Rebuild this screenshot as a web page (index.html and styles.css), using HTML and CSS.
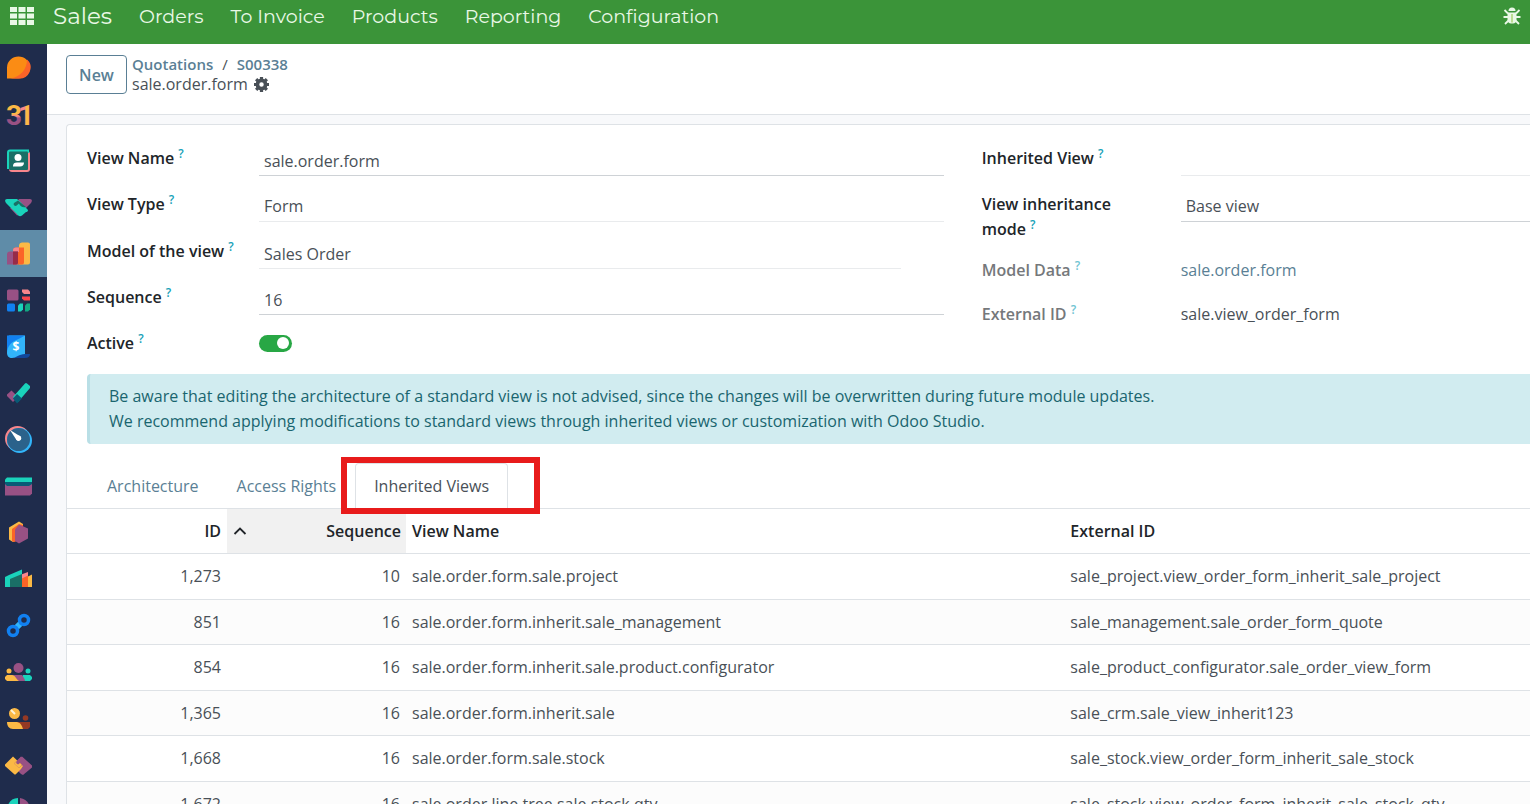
FILE: index.html
```html
<!DOCTYPE html>
<html lang="en">
<head>
    <meta charset="UTF-8">
    <meta name="viewport" content="width=device-width, initial-scale=1.0">
    <title>sale.order.form</title>
    <link rel="stylesheet" href="styles.css">
</head>
<body>

    <nav class="navbar">
        <button class="apps-btn" aria-label="Apps">
            <svg width="24" height="18" viewBox="0 0 24 18" fill="#e9f8e6">
                <rect x="0" y="0" width="7" height="5"/><rect x="8.5" y="0" width="7" height="5"/><rect x="17" y="0" width="7" height="5"/>
                <rect x="0" y="6.5" width="7" height="5"/><rect x="8.5" y="6.5" width="7" height="5"/><rect x="17" y="6.5" width="7" height="5"/>
                <rect x="0" y="13" width="7" height="5"/><rect x="8.5" y="13" width="7" height="5"/><rect x="17" y="13" width="7" height="5"/>
            </svg>
        </button>
        <a class="brand" href="#">Sales</a>
        <div class="menu">
            <a href="#">Orders</a>
            <a href="#">To Invoice</a>
            <a href="#">Products</a>
            <a href="#">Reporting</a>
            <a href="#">Configuration</a>
        </div>
        <button class="debug-btn" aria-label="Debug">
            <svg width="18" height="18" viewBox="0 0 18 18" fill="#e9f8e6" stroke="#e9f8e6">
                <path d="M5.5 4a3.5 3.5 0 0 1 7 0z" stroke="none"/>
                <path d="M4.500 5.500h9v7c0 2.500-1.500 4-3.500 4H8c-2 0-3.500-1.500-3.500-4z" stroke="none"/>
                <path d="M1.500 3l3.500 3.500M16.500 3L13 6.500M0.500 10H5M17.500 10H13M2 17L5.500 13.500M16 17L12.500 13.500" fill="none" stroke-width="1.800"/>
                <path d="M9 7v8.500" stroke="#8dc13f" stroke-width="1"/>
            </svg>
        </button>
    </nav>

    <div class="main">
        <aside class="sidebar">
            <a href="#" aria-label="Discuss"><svg viewBox="0 0 27 27">
                <path d="M2 24.500V13.500A11.500 11 0 1 1 13.500 24.500z" fill="#fb8c14"/>
                <path d="M22 5.500A11.300 11 0 0 1 13.500 24.500H5C16 23 22 15 22 5.500z" fill="#fb6428"/>
            </svg></a>
            <a href="#" aria-label="Calendar"><svg viewBox="0 0 27 27">
                <defs>
                    <linearGradient id="three" x1="0" y1="0" x2="0" y2="1">
                        <stop offset="0.450" stop-color="#fbb945"/>
                        <stop offset="0.520" stop-color="#f7868c"/>
                        <stop offset="0.580" stop-color="#985184"/>
                    </linearGradient>
                    <linearGradient id="one" x1="0" y1="0" x2="1" y2="0">
                        <stop offset="0.450" stop-color="#f7868c"/>
                        <stop offset="0.480" stop-color="#fbb945"/>
                    </linearGradient>
                </defs>
                <text class="day" x="1" y="24" fill="url(#three)">3</text>
                <text class="day" x="13" y="24" fill="url(#one)">1</text>
            </svg></a>
            <a href="#" aria-label="Contacts"><svg viewBox="0 0 27 27">
                <rect x="4" y="4" width="21" height="21" rx="3" fill="#f7868c"/>
                <path d="M5 2.500H24V6H6V22H2V5.500A3 3 0 0 1 5 2.500z" fill="#1ad3bb"/>
                <rect x="4" y="4.500" width="19" height="18.500" rx="1" fill="#1a6f66"/>
                <circle cx="13" cy="10.500" r="3.500" fill="#fff"/>
                <path d="M8 19C8 16.500 9.500 15.500 12 15.500H19C19 18 17.500 19.500 15 19.500H8z" fill="#fff"/>
            </svg></a>
            <a href="#" aria-label="CRM"><svg viewBox="0 0 27 27">
                <path d="M14 5H25C27 5 27.500 7 26 9L20 15L11 9z" fill="#985184"/>
                <path d="M5 14L10 12L15 20L12 21.500z" fill="#985184"/>
                <path d="M2 5H12L15 7.500L23 16C23 17.500 22 18 21 18L17 21.500C15 23 13 22 12 20L1 9C-.5 7 0 5 2 5z" fill="#1ad3bb"/>
                <path d="M13 6.500L21 13C18 14 15 12.500 14 9.500L11 12C9 12 8 10.500 9 9z" fill="#1a6f66"/>
            </svg></a>
            <a href="#" class="active" aria-label="Sales"><svg viewBox="0 0 27 27">
                <path d="M17 2.500H23A2 2 0 0 1 25 4.500V22.500A2 2 0 0 1 23 24.500H14V5A3 3 0 0 1 17 2.500z" fill="#fbb945"/>
                <path d="M11 7.500H19V22.500A2 2 0 0 1 17 24.500H8V10.500A3 3 0 0 1 11 7.500z" fill="#fb6428"/>
                <path d="M11 7.500H14V12H8V10.500A3 3 0 0 1 11 7.500z" fill="#f7868c"/>
                <path d="M5 11.500H13V22.500A2 2 0 0 1 11 24.500H2V14.500A3 3 0 0 1 5 11.500z" fill="#985184"/>
                <path d="M8 11.500H13V22.500A2 2 0 0 1 11 24.500H8z" fill="#962b48"/>
            </svg></a>
            <a href="#" aria-label="Dashboards"><svg viewBox="0 0 27 27">
                <rect x="2" y="2.500" width="11.500" height="11" rx="1.500" fill="#985184"/>
                <path d="M17 2.500H23L25 4.500V7H19L17 5z" fill="#f7868c"/>
                <path d="M17 9.500H25V13.500H19L17 11.500z" fill="#f9464c"/>
                <rect x="2" y="16.500" width="8" height="8" rx="1.500" fill="#1180f0"/>
                <path d="M13 18.500L15 16.500H18V22.500L16 24.500H13z" fill="#1ad3bb"/>
                <path d="M20 18.500L22 16.500H25V22.500L23 24.500H20z" fill="#12a882"/>
            </svg></a>
            <a href="#" aria-label="Invoicing"><svg viewBox="0 0 27 27">
                <path d="M9 21H25C25 23.500 23 25 20 25H5z" fill="#12479b"/>
                <path d="M4 2.500H20V21C14 21 11 25 7 25C4 25 2 23 2 20V4.500z" fill="#32b5fa"/>
                <path d="M2 2.500H20C14 6 8 8 5 11.500C3 14 2 17 2 20z" fill="#1180f0"/>
                <text x="11" y="18" class="dollar">$</text>
            </svg></a>
            <a href="#" aria-label="To-do"><svg viewBox="0 0 27 27">
                <path d="M2 14.500L6.500 10.500L13 17L8 22L2 16z" fill="#985184"/>
                <path d="M20 3.500Q21 2.500 22 3.500L25 6V8L13 22L8 17z" fill="#1ad3bb"/>
                <path d="M12 14L17 18.500L12 23.500L8 18.500z" fill="#085b76"/>
            </svg></a>
            <a href="#" aria-label="Timesheets"><svg viewBox="0 0 27 27">
                <circle cx="12.500" cy="12.500" r="12.500" fill="#f7868c"/>
                <circle cx="14.500" cy="14.500" r="12.500" fill="#32b5fa"/>
                <circle cx="13.500" cy="13.500" r="11.500" fill="#2b628b"/>
                <path d="M5 4L15.500 10.500A2.500 2.500 0 0 1 11.500 14z" fill="#fff"/>
                <circle cx="13.500" cy="12" r="2.500" fill="#fff"/>
            </svg></a>
            <a href="#" aria-label="Expenses"><svg viewBox="0 0 27 27">
                <path d="M0 11H27V20.500L25 22.500H0z" fill="#985184"/>
                <path d="M0 8H27V11L24 13H2L0 11z" fill="#085b76"/>
                <path d="M2 4.500H27V9H0V6.500z" fill="#1ad3bb"/>
            </svg></a>
            <a href="#" aria-label="Inventory"><svg viewBox="0 0 27 27">
                <path d="M14 2.500L18 5V18L8 23L4 20.500V8.500z" fill="#fbb945"/>
                <path d="M14 5L18 6V20L9 23L7 22V10z" fill="#fb6428"/>
                <path d="M14 5.500L23 9.500V19.500L14 24.500L10 22V10.500z" fill="#985184"/>
            </svg></a>
            <a href="#" aria-label="Manufacturing"><svg viewBox="0 0 27 27">
                <path d="M20 12L27 8.500V21H20z" fill="#fbb945"/>
                <path d="M15 9L23 6V13L17 16z" fill="#f7868c"/>
                <path d="M16 13L23 9.500V21H16z" fill="#fb6428"/>
                <path d="M0 11L4 9L17 3.500V21H0z" fill="#1ad3bb"/>
                <path d="M5 13L17 8V21H5z" fill="#1a6f66"/>
            </svg></a>
            <a href="#" aria-label="Link tracker"><svg viewBox="0 0 27 27" fill="none">
                <path d="M8 19L19 8" stroke="#32b5fa" stroke-width="6"/>
                <circle cx="19" cy="8" r="4.500" fill="#1f2c4c" stroke="#1180f0" stroke-width="3.500"/>
                <circle cx="8" cy="19" r="4.500" fill="#1f2c4c" stroke="#1180f0" stroke-width="3.500"/>
            </svg></a>
            <a href="#" aria-label="Employees"><svg viewBox="0 0 27 27">
                <circle cx="13.500" cy="9" r="5" fill="#985184"/>
                <circle cx="4" cy="12" r="2.500" fill="#fbb945"/>
                <circle cx="23" cy="12" r="2.500" fill="#1ad3bb"/>
                <path d="M2 16H10L17 22H2L0 20V18z" fill="#fbb945"/>
                <path d="M18 16H25L27 18V20L25 22H15z" fill="#1ad3bb"/>
                <path d="M7 16H17C19 19 20 20 20 22H14C11 20 10 16 7 16z" fill="#985184"/>
            </svg></a>
            <a href="#" aria-label="Attendances"><svg viewBox="0 0 27 27">
                <circle cx="9.500" cy="8.500" r="5.500" fill="#fbb945"/>
                <path d="M6 5L10 9" stroke="#fff3d5" stroke-width="2"/>
                <circle cx="20.500" cy="13" r="2.800" fill="#953924"/>
                <path d="M11 17H25V22L23 24H13z" fill="#953924"/>
                <path d="M2 17H12C16 18 17 21 18 24H8C4 24 2 21 2 17z" fill="#fbb945"/>
            </svg></a>
            <a href="#" aria-label="Time off"><svg viewBox="0 0 27 27">
                <path d="M17 4.500L27 13.500V15.500L18 23L16 22L9 15L11 10z" fill="#985184"/>
                <path d="M8 4.500L18 14L16 17L11 22Q10 23 9 22L0 14V12.500z" fill="#fbb945"/>
                <path d="M16 4.500L9 11.500L14 16L18 12.500L15 10L19 7z" fill="#985184"/>
                <path d="M12 9L9 11.500L14 16L17 13L15 11L13 12.500L11 11z" fill="#fbb945"/>
            </svg></a>
            <a href="#" aria-label="Surveys"><svg viewBox="0 0 27 27">
                <path d="M13 0V14H2V11C3 4 7 0 13 0z" fill="#1ad3bb"/>
                <path d="M15 0C21 1 25 5 25 12H15z" fill="#985184"/>
            </svg></a>
        </aside>

        <div class="content">
            <header class="control-panel">
                <button class="new-btn">New</button>
                <div class="breadcrumb">
                    <div class="crumbs"><a href="#">Quotations</a><span class="sep">/</span><a href="#">S00338</a></div>
                    <div class="current">
                        <span>sale.order.form</span>
                        <button class="gear-btn" aria-label="Actions">
                            <svg width="15" height="15" viewBox="0 0 14 14">
                                <circle cx="7" cy="7" r="3.800" fill="none" stroke="#495057" stroke-width="3.400"/>
                                <path d="M7 0V2.500M7 11.500V14M0 7H2.500M11.500 7H14M2 2L4 4M10 10L12 12M12 2L10 4M4 10L2 12" stroke="#495057" stroke-width="3"/>
                            </svg>
                        </button>
                    </div>
                </div>
            </header>

            <main class="sheet">
                <form class="groups">
                    <div class="group">
                        <div class="row">
                            <label for="name">View Name <sup>?</sup></label>
                            <input type="text" id="name" class="field required" value="sale.order.form">
                        </div>
                        <div class="row tall">
                            <label for="type">View Type <sup>?</sup></label>
                            <select id="type" class="field"><option>Form</option></select>
                        </div>
                        <div class="row">
                            <label for="model">Model of the view <sup>?</sup></label>
                            <input type="text" id="model" class="field many2one" value="Sales Order">
                        </div>
                        <div class="row">
                            <label for="sequence">Sequence <sup>?</sup></label>
                            <input type="text" id="sequence" class="field required" value="16">
                        </div>
                        <div class="row last">
                            <label for="active">Active <sup>?</sup></label>
                            <input type="checkbox" id="active" class="toggle" checked>
                        </div>
                    </div>
                    <div class="group right">
                        <div class="row">
                            <label for="inherited">Inherited View <sup>?</sup></label>
                            <input type="text" id="inherited" class="field">
                        </div>
                        <div class="row double">
                            <label for="mode">View inheritance mode <sup>?</sup></label>
                            <select id="mode" class="field required"><option>Base view</option></select>
                        </div>
                        <div class="row readonly">
                            <span class="label">Model Data <sup>?</sup></span>
                            <a href="#">sale.order.form</a>
                        </div>
                        <div class="row readonly">
                            <span class="label">External ID <sup>?</sup></span>
                            <span>sale.view_order_form</span>
                        </div>
                    </div>
                </form>

                <div class="alert">
                    Be aware that editing the architecture of a standard view is not advised, since the changes will be overwritten during future module updates.<br>
                    We recommend applying modifications to standard views through inherited views or customization with Odoo Studio.
                </div>

                <div class="tabs">
                    <button class="tab">Architecture</button>
                    <button class="tab">Access Rights</button>
                    <button class="tab selected">Inherited Views</button>
                </div>

                <table class="list">
                    <thead>
                        <tr>
                            <th class="col-id">ID</th>
                            <th class="col-seq">
                                <div class="sorted">
                                    <svg width="14" height="8" viewBox="0 0 14 8"><path d="M1.500 7L7 1.500L12.500 7" fill="none" stroke="#212529" stroke-width="1.800"/></svg>
                                    <span>Sequence</span>
                                </div>
                            </th>
                            <th class="col-name">View Name</th>
                            <th>External ID</th>
                        </tr>
                    </thead>
                    <tbody>
                        <tr><td class="num">1,273</td><td class="num">10</td><td>sale.order.form.sale.project</td><td>sale_project.view_order_form_inherit_sale_project</td></tr>
                        <tr><td class="num">851</td><td class="num">16</td><td>sale.order.form.inherit.sale_management</td><td>sale_management.sale_order_form_quote</td></tr>
                        <tr><td class="num">854</td><td class="num">16</td><td>sale.order.form.inherit.sale.product.configurator</td><td>sale_product_configurator.sale_order_view_form</td></tr>
                        <tr><td class="num">1,365</td><td class="num">16</td><td>sale.order.form.inherit.sale</td><td>sale_crm.sale_view_inherit123</td></tr>
                        <tr><td class="num">1,668</td><td class="num">16</td><td>sale.order.form.sale.stock</td><td>sale_stock.view_order_form_inherit_sale_stock</td></tr>
                        <tr><td class="num">1,672</td><td class="num">16</td><td>sale.order.line.tree.sale.stock.qty</td><td>sale_stock.view_order_form_inherit_sale_stock_qty</td></tr>
                    </tbody>
                </table>
            </main>
        </div>
    </div>

</body>
</html>
```

FILE: styles.css
```css
* {
    box-sizing: border-box;
}
body {
    margin: 0;
    height: 100vh;
    overflow: hidden;
    display: flex;
    flex-direction: column;
    font-family: "Segoe UI", "Open Sans", sans-serif;
    font-size: 16px;
    line-height: 25px;
    color: #495057;
}
a {
    color: #5a7f95;
    text-decoration: none;
}
button {
    font: inherit;
    background: none;
    border: none;
    padding: 0;
    cursor: pointer;
}
svg {
    display: block;
}

/* top bar */
.navbar {
    flex: none;
    height: 44px;
    padding: 0 9px 12px 10px;
    display: flex;
    align-items: center;
    background-color: #3b9439;
    font-family: Montserrat, Inter, sans-serif;
    font-size: 19px;
}
.navbar a {
    color: #e9f8e6;
}
.brand {
    margin-left: 19px;
    font-size: 23px;
}
.menu {
    display: flex;
    gap: 27px;
    margin-left: 27px;
}
.debug-btn {
    margin-left: auto;
}

.main {
    flex: 1;
    min-height: 0;
    display: flex;
}

/* app sidebar */
.sidebar {
    flex: none;
    width: 47px;
    overflow: hidden;
    background-color: #1f2c4c;
}
.sidebar a {
    height: 46px;
    padding-left: 5px;
    display: flex;
    align-items: center;
}
.sidebar a:nth-child(odd) {
    height: 47px;
}
.sidebar .active {
    background-color: #5f8ca8;
}
.sidebar svg {
    width: 27px;
    height: 27px;
}
.day {
    font-family: Roboto, sans-serif;
    font-size: 28px;
    font-weight: 700;
}
.dollar {
    font-size: 12px;
    font-weight: bold;
    fill: #fff;
    text-anchor: middle;
}

.content {
    flex: 1;
    min-width: 0;
    display: flex;
    flex-direction: column;
    background-color: #f8f9fb;
}

/* control panel */
.control-panel {
    flex: none;
    height: 71px;
    padding: 10px 19px 0;
    display: flex;
    align-items: flex-start;
    gap: 5px;
    background-color: #fff;
    border-bottom: 1px solid #dee2e6;
}
.new-btn {
    width: 61px;
    height: 39px;
    margin-top: 1px;
    padding-top: 1px;
    border: 1px solid #5a7f95;
    border-radius: 4px;
    color: #5a7f95;
    font-weight: 600;
}
.breadcrumb {
    line-height: 20px;
}
.crumbs {
    font-size: 15px;
    font-weight: 600;
}
.sep {
    padding: 0 9px;
    font-weight: 400;
}
.current {
    display: flex;
    align-items: center;
    gap: 6px;
}

/* form sheet */
.sheet {
    flex: 1;
    min-height: 0;
    overflow: hidden;
    margin: 9px 0 0 19px;
    background-color: #fff;
    border: 1px solid #dee2e6;
    border-width: 1px 0 0 1px;
    border-radius: 4px 0 0 0;
}
.groups {
    display: grid;
    grid-template-columns: minmax(0, 25fr) minmax(0, 16fr);
    gap: 38px;
    padding: 21px 0 0 20px;
}
.row {
    height: 46px;
    display: grid;
    grid-template-columns: 172px 1fr;
    align-items: start;
}
.right .row {
    grid-template-columns: 199px 1fr;
}
.row.tall {
    height: 47px;
}
.row.last {
    height: 43px;
}
.right .row.double {
    height: 66px;
}
.right .row.readonly {
    height: 44px;
}
.row label,
.row .label {
    font-weight: 600;
    color: #212529;
}
.right label {
    padding-right: 50px;
}
.row .label {
    color: #75787b;
}
sup {
    font-size: 12px;
    line-height: 0;
    color: #17a2b8;
}
.label sup {
    color: #6fc4d2;
}
.field {
    width: 100%;
    height: 30px;
    padding: 0 5px;
    border: none;
    border-bottom: 1px solid #e9ebed;
    border-radius: 0;
    background: none;
    appearance: none;
    font: inherit;
    color: #495057;
    outline: none;
}
.field.required {
    border-color: #ced2d6;
}
.many2one {
    width: calc(100% - 43px);
}
.toggle {
    appearance: none;
    width: 33px;
    height: 17px;
    margin: 4px 0 0;
    padding: 2px 3px;
    border-radius: 9px;
    background-color: #28a745;
    display: flex;
    justify-content: flex-end;
}
.toggle::before {
    content: "";
    width: 12px;
    height: 12px;
    border-radius: 50%;
    background-color: #fff;
}

.alert {
    margin: 0 0 0 20px;
    padding: 10px 19px;
    border-left: 3px solid #b9dfe6;
    border-radius: 4px 0 0 4px;
    background-color: #d1ecf0;
    color: #19656f;
    white-space: nowrap;
}

/* notebook */
.tabs {
    display: flex;
    padding: 19px 0 0 21px;
    border-bottom: 1px solid #dee2e6;
}
.tab {
    height: 45px;
    padding: 0 18px;
    border: 1px solid transparent;
    border-bottom: none;
    color: #5a7f95;
}
.tab.selected {
    position: relative;
    border-color: #dee2e6;
    border-radius: 4px 4px 0 0;
    color: #495057;
}
.tab.selected::after {
    content: "";
    position: absolute;
    inset: -7px -33px -6px -15px;
    border: 6px solid #e81b1b;
}

/* list */
.list {
    width: 100%;
    table-layout: fixed;
    border-collapse: separate;
    border-spacing: 0;
}
.list th,
.list td {
    height: 45px;
    padding: 0 6px;
    border-bottom: 1px solid #dee2e6;
    text-align: left;
    white-space: nowrap;
}
.list th {
    font-weight: 600;
    color: #212529;
}
.list tbody tr:nth-child(odd) td {
    height: 46px;
}
.list tbody tr:nth-child(even) {
    background-color: #fcfcfc;
}
.list .col-id,
.list .num {
    text-align: right;
}
.list .col-id {
    width: 160px;
}
.list .col-seq {
    width: 179px;
    padding-right: 5px;
    background-color: #f1f1f1;
}
.col-name {
    width: 45%;
}
.sorted {
    display: flex;
    justify-content: space-between;
    align-items: center;
}
```
